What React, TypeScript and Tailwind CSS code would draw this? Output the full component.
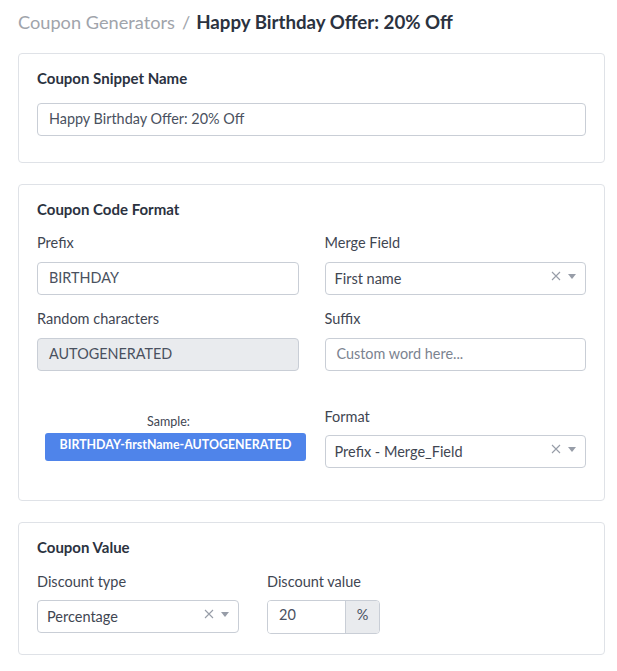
import React from "react";

const font = "font-['Lato','Noto_Sans',sans-serif]";

function Chev() {
  return (
    <span className="flex items-center gap-[7px] mt-[-5px]">
      <svg width="10" height="10" viewBox="0 0 10 10" fill="none" stroke="#979da8" strokeWidth="1.1"><path d="M1 1l8 8M9 1L1 9" /></svg>
      <svg width="8" height="5" viewBox="0 0 8 5" fill="#979da8"><path d="M0 0h8L4 5z" /></svg>
    </span>
  );
}

function Select({ value }: { value: string }) {
  return (
    <div className="h-[33px] flex items-center justify-between rounded-[4px] border border-[#c9ced6] bg-white pl-[9px] pr-[9px] text-[14.5px] text-[#3f4652]">
      <span>{value}</span>
      <Chev />
    </div>
  );
}

function Input({ value, placeholder, disabled }: { value?: string; placeholder?: boolean; disabled?: boolean }) {
  return (
    <div className={`h-[33px] flex items-center rounded-[4px] border border-[#c9ced6] px-[11px] pb-[2px] text-[14.4px] ${disabled ? "bg-[#e9ebee]" : "bg-white"} ${placeholder ? "text-[#7b8390]" : "text-[#4a5160]"}`}>
      {value}
    </div>
  );
}

function Label({ children }: { children: React.ReactNode }) {
  return <div className="h-[20px] leading-[22px] text-[14.5px] text-[#3f4652]">{children}</div>;
}

function Heading({ children }: { children: React.ReactNode }) {
  return <div className="h-[20px] leading-[18px] text-[15px] font-bold text-[#2b3240]">{children}</div>;
}

export default function App() {
  return (
    <div className={`${font} w-[617px] h-[671px] overflow-hidden bg-white pl-[18px] pr-[12px]`}>
      <div className="h-[53px] pt-[9px] flex items-start leading-[26px]">
        <span className="text-[18.2px] text-[#a0a4ab]">Coupon Generators</span>
        <span className="text-[18.2px] text-[#a0a4ab] ml-[7px] mr-[6px]">/</span>
        <span className="text-[18.7px] font-bold text-[#2b3240]">Happy Birthday Offer: 20% Off</span>
      </div>

      <div className="h-[110px] rounded-[4px] border border-[#dfe2e7] px-[18px] pt-[15px]">
        <Heading>Coupon Snippet Name</Heading>
        <div className="mt-[14px]"><Input value="Happy Birthday Offer: 20% Off" /></div>
      </div>

      <div className="mt-[21px] h-[317px] rounded-[4px] border border-[#dfe2e7] px-[18px] pt-[15px]">
        <Heading>Coupon Code Format</Heading>
        <div className="grid grid-cols-2 gap-x-[26px] mt-[12px]">
          <div>
            <Label>Prefix</Label>
            <div className="mt-[10px]"><Input value="BIRTHDAY" /></div>
            <div className="mt-[13px]"><Label>Random characters</Label></div>
            <div className="mt-[10px]"><Input value="AUTOGENERATED" disabled /></div>
            <div className="mt-[41px] ml-[8px] w-[261px] text-center">
              <div className="h-[18px] text-[12.5px] leading-[20px] text-[#3f4652] pr-[14px]">Sample:</div>
              <div className="mt-[3px] h-[28px] rounded-[3px] bg-[#4f84ea] text-white text-[12.4px] font-bold leading-[24px] text-center">BIRTHDAY-firstName-AUTOGENERATED</div>
            </div>
          </div>
          <div>
            <Label>Merge Field</Label>
            <div className="mt-[10px]"><Select value="First name" /></div>
            <div className="mt-[13px]"><Label>Suffix</Label></div>
            <div className="mt-[10px]"><Input value="Custom word here..." placeholder /></div>
            <div className="mt-[35px]"><Label>Format</Label></div>
            <div className="mt-[9px]"><Select value="Prefix - Merge_Field" /></div>
          </div>
        </div>
      </div>

      <div className="mt-[21px] h-[133px] rounded-[4px] border border-[#dfe2e7] px-[18px] pt-[15px]">
        <Heading>Coupon Value</Heading>
        <div className="flex mt-[13px]">
          <div className="w-[202px]">
            <Label>Discount type</Label>
            <div className="mt-[9px]"><Select value="Percentage" /></div>
          </div>
          <div className="ml-[28px] w-[113px]">
            <Label>Discount value</Label>
            <div className="mt-[9px] h-[34px] flex rounded-[4px] border border-[#c9ced6] text-[14.5px] text-[#4a5160] overflow-hidden">
              <div className="w-[77px] bg-white pl-[11px] leading-[28px]">20</div>
              <div className="flex-1 bg-[#e9ebee] border-l border-[#c9ced6] text-center leading-[28px]">%</div>
            </div>
          </div>
        </div>
      </div>
    </div>
  );
}
